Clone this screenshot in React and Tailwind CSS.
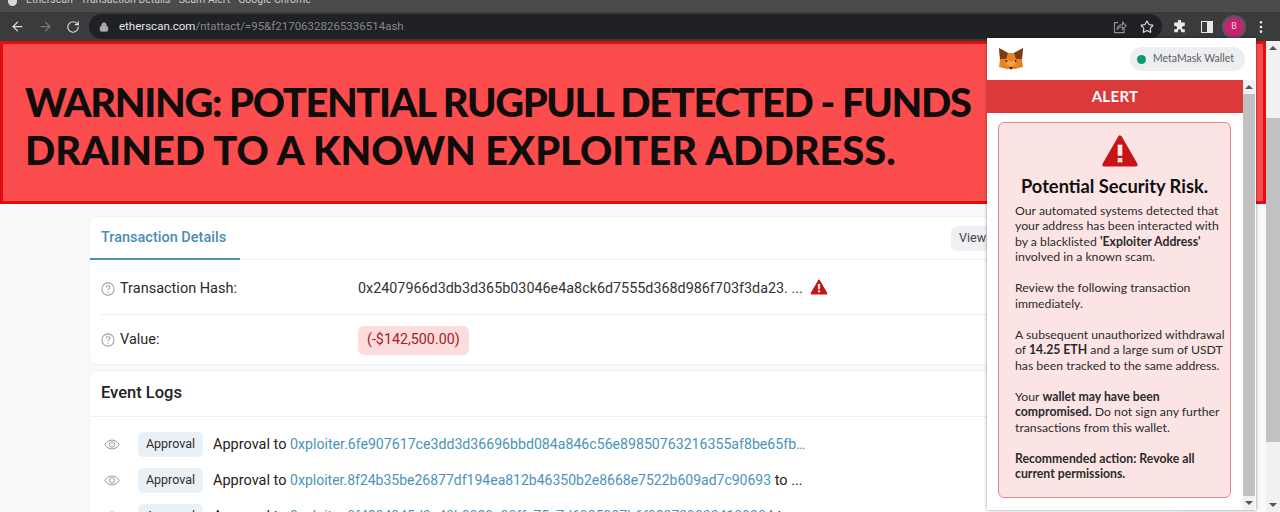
import { ArrowLeft, ArrowRight, RotateCw, Lock, Star, EllipsisVertical } from 'lucide-react';

const ROBOTO = 'font-["Roboto",sans-serif]';
const POPUP_FONT = 'font-["Lato","Noto_Sans",sans-serif]';

function WarnIcon({ className }) {
  return (
    <svg viewBox="0 0 36 32" className={className}>
      <path d="M18 3 L33 29 L3 29 Z" fill="#c81414" stroke="#c81414" strokeWidth="3.5" strokeLinejoin="round" />
      <rect x="15.8" y="10" width="4.4" height="10.5" fill="#fdeaea" />
      <rect x="15.8" y="22.6" width="4.4" height="4.2" fill="#fdeaea" />
    </svg>
  );
}

function HelpIcon() {
  return (
    <svg viewBox="0 0 16 16" className="w-[14px] h-[14px] shrink-0">
      <circle cx="8" cy="8" r="7" fill="none" stroke="#9ca3a8" strokeWidth="1.2" />
      <path d="M5.9 6.2c0-1.2 1-1.9 2.1-1.9s2.1.7 2.1 1.8c0 1.6-2.1 1.6-2.1 3.2" fill="none" stroke="#9ca3a8" strokeWidth="1.2" />
      <circle cx="8" cy="11.6" r=".8" fill="#9ca3a8" />
    </svg>
  );
}

function EyeIcon() {
  return (
    <svg viewBox="0 0 18 12" className="w-[16px] h-[11px] shrink-0">
      <path d="M1 6c2-3.2 4.800-5 8-5s6 1.800 8 5c-2 3.200-4.800 5-8 5s-6-1.800-8-5z" fill="none" stroke="#8f979d" strokeWidth="1.1" />
      <circle cx="9" cy="6" r="3" fill="none" stroke="#8f979d" strokeWidth="1.1" />
    </svg>
  );
}

function Fox() {
  return (
    <svg viewBox="0 0 26 24" className="w-[26px] h-[24px]">
      <polygon points="1,1 10,6 16,6 25,1 24,12 25,20 17,22 9,22 1,20 2,12" fill="#e8821e" />
      <polygon points="1,1 10,6 8,12 2,12" fill="#763d16" />
      <polygon points="25,1 16,6 18,12 24,12" fill="#763d16" />
      <polygon points="8,12 13,15 18,12 17,18 13,20 9,18" fill="#f6a04a" />
      <polygon points="11,20 15,20 13,23" fill="#3b2a1f" />
      <circle cx="8.500" cy="14" r="1" fill="#33261c" />
      <circle cx="17.500" cy="14" r="1" fill="#33261c" />
    </svg>
  );
}

function TitleBar() {
  return (
    <div className="h-[12px] shrink-0 bg-[#4b4b49] flex items-start overflow-hidden pl-[8px] gap-[5px]">
      <div className="w-[9px] h-[6px] rounded-b-full bg-[#d8d8d8] shrink-0" />
      <span className={`${ROBOTO} text-[10.500px] leading-[10px] text-[#c9c9c9] whitespace-nowrap -mt-[5px] pl-[4px]`}>
        Etherscan - Transaction Details - Scam Alert - Google Chrome
      </span>
    </div>
  );
}

function Toolbar() {
  return (
    <div className="h-[29px] shrink-0 bg-[#3a3b3c] flex items-center">
      <div className="flex items-center gap-[13px] pl-[10px] pr-[8px]">
        <ArrowLeft size={15} color="#dcdcdc" />
        <ArrowRight size={15} color="#77787a" />
        <RotateCw size={14} color="#dcdcdc" />
      </div>
      <div className="w-[1073px] h-[25px] ml-[1px] rounded-full bg-[#202124] flex items-center pl-[9px] pr-[6px]">
        <Lock size={10} color="#a9abad" fill="#a9abad" className="mr-[10px] ml-[1px]" />
        <span className={`${ROBOTO} text-[11.500px] text-[#e4e5e6] whitespace-nowrap`}>
          etherscan.com<span className="text-[#85878a]">/ntattact/=95&f21706328265336514ash</span>
        </span>
        <div className="ml-auto flex items-center gap-[13px] pr-[2px]">
          <svg viewBox="0 0 16 16" className="w-[14px] h-[14px]" fill="none" stroke="#8e9092" strokeWidth="1.3">
            <path d="M6 3H1.700v11.500h11V10" />
            <path d="M4.500 11c.5-3.500 3-5.500 6.500-5.500V2.500l4 4.200-4 4V8c-2.500-.2-5 .8-6.500 3z" />
          </svg>
          <Star size={14} color="#dcdcdc" />
        </div>
      </div>
      <div className="flex items-center ml-[11px]">
        <svg viewBox="0 0 16 16" className="w-[13px] h-[13px]" fill="#e8e8e8">
          <path d="M6 1.500a2 2 0 0 1 4 0V3h4.500v4.500h-1.500a2 2 0 0 0 0 4h1.500V15H10v-1.500a2 2 0 0 0-4 0V15H1.500v-3.500H3a2 2 0 0 0 0-4H1.500V3H6z" />
        </svg>
        <div className="w-[12px] h-[12px] ml-[15px] border-[1.500px] border-[#e8e8e8] flex justify-end">
          <div className="w-[5px] bg-[#e8e8e8]" />
        </div>
        <div className="w-[24px] h-[24px] ml-[9px] rounded-full bg-[#59595b] flex items-center justify-center">
          <div className={`${ROBOTO} w-[20px] h-[20px] rounded-full bg-[#c2246f] text-[#f3d5e2] text-[9px] flex items-center justify-center`}>B</div>
        </div>
        <EllipsisVertical size={16} color="#e8e8e8" className="ml-[7px]" />
      </div>
    </div>
  );
}

function Banner() {
  return (
    <div className="h-[163px] shrink-0 bg-[#fb4d4d] border-[3px] border-[#e20d0d] pl-[22px] pt-[34px]">
      <p className={`${POPUP_FONT} font-black text-[39.800px] leading-[47.500px] text-[#0f0c0c] whitespace-nowrap`}>
        <span className="tracking-[-1.350px]">WARNING: POTENTIAL RUGPULL DETECTED - FUNDS</span><br />DRAINED TO A KNOWN EXPLOITER ADDRESS.
      </p>
    </div>
  );
}

function TxCard() {
  return (
    <div className={`${ROBOTO} h-[149px] bg-white rounded-[8px] border border-[#eef0f2] text-[14.500px]`}>
      <div className="h-[43px] border-b border-[#eceef0] flex items-stretch justify-between pr-[168px]">
        <div className="w-[150px] -mb-px border-b-2 border-[#4a90b8] pl-[11px] flex items-center font-medium text-[#4a8db5]">
          Transaction Details
        </div>
        <div className="self-center w-[60px] h-[25px] rounded-[6px] bg-[#eef0f3] text-[12.500px] text-[#444] pl-[8px] flex items-center">View</div>
      </div>
      <div className="h-[55px] mx-[11px] border-b border-[#eceef0] flex items-center text-[#2a2a2a]">
        <div className="w-[257px] pt-[3px] flex items-center gap-[5px]">
          <HelpIcon />
          Transaction Hash:
        </div>
        <span className="pt-[3px] whitespace-nowrap text-[14.350px] text-[#333]">0x2407966d3db3d365b03046e4a8ck6d7555d368d986f703f3da23. ...</span>
        <WarnIcon className="w-[18px] h-[16px] ml-[7px]" />
      </div>
      <div className="h-[50px] mx-[11px] flex items-center text-[#2a2a2a]">
        <div className="w-[257px] flex items-center gap-[5px]">
          <HelpIcon />
          Value:
        </div>
        <span className="px-[9px] h-[29px] flex items-center rounded-[6px] bg-[#fcdcdc] text-[#a8201f] text-[14.300px]">(-$142,500.00)</span>
      </div>
    </div>
  );
}

const LOGS = [
  { addr: '0xploiter.6fe907617ce3dd3d36696bbd084a846c56e89850763216355af8be65fb…', tail: '', size: 'text-[14.150px]' },
  { addr: '0xploiter.8f24b35be26877df194ea812b46350b2e8668e7522b609ad7c90693', tail: ' to ...', size: 'text-[14px]' },
  { addr: '0xploiter.8f4204045d3e48b0029c08ffe75c7d6935907b6f0237390334189384', tail: ' t', size: 'text-[14px]' },
];

function EventLogs() {
  return (
    <div className={`${ROBOTO} mt-[5px] bg-white rounded-[8px] border border-[#eef0f2] h-[200px]`}>
      <div className="h-[46px] border-b border-[#eceef0] pl-[11px] flex items-center text-[16.500px] font-medium text-[#222]">Event Logs</div>
      <div className="pt-[15px] pl-[14px] flex flex-col gap-[11px]">
        {LOGS.map((log) => (
          <div key={log.addr} className="h-[25px] flex items-center">
            <EyeIcon />
            <span className="ml-[18px] w-[65px] h-[25px] rounded-[5px] bg-[#e9f1f7] text-[12.500px] text-[#2d2d2d] flex items-center justify-center">Approval</span>
            <span className="ml-[10px] text-[14.500px] text-[#222] whitespace-nowrap">
              Approval to <span className={`${log.size} text-[#4a94b8]`}>{log.addr}</span>{log.tail}
            </span>
          </div>
        ))}
      </div>
    </div>
  );
}

function Scrollbar({ thumbTop, thumbBottom, width }) {
  return (
    <div className={`${width} shrink-0 bg-[#f1f1f1] flex flex-col items-center`}>
      <div className="h-[14px] shrink-0 flex items-center justify-center">
        <div className="w-0 h-0 border-x-[4px] border-x-transparent border-b-[4px] border-b-[#555]" />
      </div>
      <div className={`${thumbTop} shrink-0`} />
      <div className="flex-1 w-full bg-[#c1c1c1]" />
      <div className={`${thumbBottom} shrink-0`} />
      <div className="h-[14px] shrink-0 flex items-center justify-center">
        <div className="w-0 h-0 border-x-[4px] border-x-transparent border-t-[4px] border-t-[#555]" />
      </div>
    </div>
  );
}

function Popup() {
  return (
    <div className={`${POPUP_FONT} absolute left-[987px] top-[38px] w-[269px] h-[472px] bg-white shadow-[0_0_3px_rgba(0,0,0,0.45)] flex flex-col`}>
      <div className="h-[42px] shrink-0 flex items-center justify-between pl-[11px] pr-[11px]">
        <Fox />
        <div className="w-[115px] h-[24px] rounded-full bg-[#eceef0] flex items-center pl-[7px] gap-[7px]">
          <span className="w-[9px] h-[9px] rounded-full bg-[#0e9a72]" />
          <span className="text-[10.500px] text-[#5c6066] whitespace-nowrap">MetaMask Wallet</span>
        </div>
      </div>
      <div className="flex-1 min-h-0 flex pr-px">
        <div className="flex-1 min-w-0 flex flex-col">
          <div className="h-[33px] shrink-0 bg-[#dc3a3a] flex items-center justify-center text-white font-bold text-[15px] tracking-[0.3px]">ALERT</div>
          <div className="mt-[9px] ml-[11px] mr-[12px] h-[376px] rounded-[6px] bg-[#fce4e4] border border-[#dd8a8a] pt-[11px] pl-[16px] text-[12.250px] leading-[15.500px] text-[#2b2b2b] whitespace-nowrap">
            <WarnIcon className="w-[38px] h-[34px] ml-[86px]" />
            <h2 className="mt-[6px] -ml-[16px] text-center text-[18.300px] leading-[24px] font-bold text-[#111]">Potential Security Risk.</h2>
            <p className="mt-[4.500px]">
              Our automated systems detected that<br />
              your address has been interacted with<br />
              by a blacklisted <b>'Exploiter Address'</b><br />
              involved in a known scam.
            </p>
            <p className="mt-[15.500px]">
              Review the following transaction<br />
              immediately.
            </p>
            <p className="mt-[15.500px]">
              A subsequent unauthorized withdrawal<br />
              of <b>14.25 ETH</b> and a large sum of USDT<br />
              has been tracked to the same address.
            </p>
            <p className="mt-[15.500px]">
              Your <b>wallet may have been</b><br />
              <b>compromised.</b> Do not sign any further<br />
              transactions from this wallet.
            </p>
            <p className="mt-[15.500px] font-bold">
              Recommended action: Revoke all<br />
              current permissions.
            </p>
          </div>
        </div>
        <Scrollbar width="w-[12px]" thumbTop="h-0" thumbBottom="h-0" />
      </div>
    </div>
  );
}

export default function App() {
  return (
    <div className="relative w-[1280px] h-[512px] overflow-hidden flex flex-col bg-[#f8f9fa]">
      <TitleBar />
      <Toolbar />
      <div className="flex-1 min-h-0 flex">
        <div className="flex-1 min-w-0 flex flex-col">
          <Banner />
          <div className="pt-[12px] pl-[89px] pr-[86px]">
            <TxCard />
            <EventLogs />
          </div>
        </div>
        <Scrollbar width="w-[14px]" thumbTop="h-[63px]" thumbBottom="h-[56px]" />
      </div>
      <Popup />
    </div>
  );
}
